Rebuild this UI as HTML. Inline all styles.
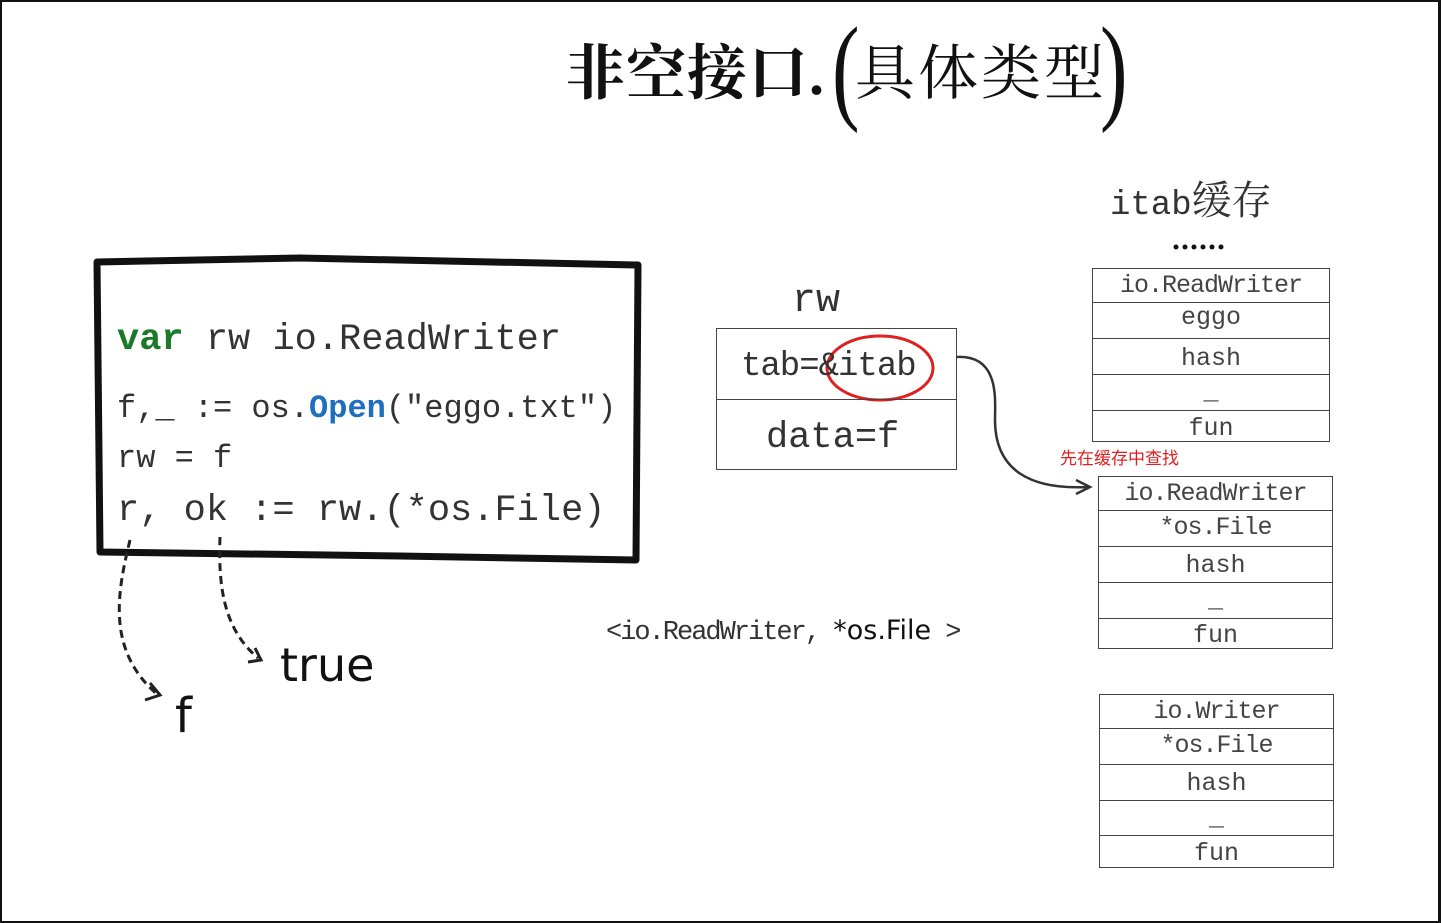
<!DOCTYPE html>
<html><head><meta charset="utf-8"><style>
body{margin:0;background:#fff;}
#c{position:relative;width:1441px;height:923px;overflow:hidden;background:#fff;}
#b{position:absolute;left:0;top:0;width:1441px;height:923px;box-sizing:border-box;border:2px solid #111;border-right:3px solid #111;pointer-events:none;}
.a{position:absolute;white-space:nowrap;line-height:1;}
.m{font-family:"Liberation Mono",monospace;color:#333;}
.t{position:absolute;border:1.5px solid #444;box-sizing:border-box;}
.r{border-bottom:1.5px solid #444;box-sizing:border-box;text-align:center;font-family:"Liberation Mono",monospace;color:#444;font-size:25px;overflow:hidden;}
.r:last-child{border-bottom:none;}
</style></head><body><div id="c">
<div class="a" style="left:565px;top:44px;font-family:'Liberation Serif','Noto Serif CJK SC',serif;font-size:60px;font-weight:bold;color:#111;letter-spacing:1px;">非空接口.</div>
<div class="a" style="left:832px;top:10px;font-family:'Liberation Serif',serif;font-size:118px;color:#111;transform:scaleX(0.7);transform-origin:left;">(</div>
<div class="a" style="left:855px;top:44px;font-family:'Liberation Serif','Noto Serif CJK SC',serif;font-size:60px;color:#111;letter-spacing:3px;">具体类型</div>
<div class="a" style="left:1100px;top:10px;font-family:'Liberation Serif',serif;font-size:118px;color:#111;transform:scaleX(0.7);transform-origin:left;">)</div>

<svg class="a" style="left:0;top:0" width="1441" height="923">
<path d="M97 262 L300 258 L638 265 L636 560 L400 556 L100 552 Z" fill="none" stroke="#111" stroke-width="7" stroke-linejoin="round"/>
<path d="M130 540 C118 590 105 650 158 695" fill="none" stroke="#222" stroke-width="3" stroke-dasharray="8,5"/>
<path d="M150 683 L160 695 L145 700" fill="none" stroke="#222" stroke-width="3"/>
<path d="M220 537 C218 590 225 630 258 658" fill="none" stroke="#222" stroke-width="3" stroke-dasharray="8,5"/>
<path d="M255 648 L261 660 L248 662" fill="none" stroke="#222" stroke-width="3"/>
<ellipse cx="880" cy="368" rx="53" ry="32" fill="none" stroke="#e02020" stroke-width="3"/>
<path d="M957 357 C1000 355 995 400 995 420 C995 470 1030 490 1088 487" fill="none" stroke="#333" stroke-width="2.5"/>
<path d="M1076 480 L1090 487 L1076 494" fill="none" stroke="#333" stroke-width="2.5"/>
<g fill="#111"><circle cx="1176" cy="247" r="2.5"/><circle cx="1185" cy="247" r="2.5"/><circle cx="1194" cy="247" r="2.5"/><circle cx="1203" cy="247" r="2.5"/><circle cx="1212" cy="247" r="2.5"/><circle cx="1221" cy="247" r="2.5"/></g>
</svg>

<div class="a m" style="left:117px;top:322px;font-size:37px;"><b style="color:#1a7a2a">var</b> rw io.ReadWriter</div>
<div class="a m" style="left:117px;top:393px;font-size:32px;">f,_ := os.<b style="color:#1f6fc0">Open</b>("eggo.txt")</div>
<div class="a m" style="left:117px;top:443px;font-size:32px;">rw = f</div>
<div class="a m" style="left:117px;top:493px;font-size:37px;">r, ok := rw.(*os.File)</div>
<div class="a" style="left:280px;top:642px;font-family:'DejaVu Sans',sans-serif;font-size:46px;color:#111;">true</div>
<div class="a" style="left:175px;top:692px;font-family:'DejaVu Sans',sans-serif;font-size:48px;color:#111;">f</div>

<div class="a m" style="left:792px;top:282px;font-size:40px;">rw</div>
<div class="t" style="left:716px;top:328px;width:241px;height:142px;">
<div style="height:71px;border-bottom:1.5px solid #444;box-sizing:border-box;"></div></div>
<div class="a m" style="left:741px;top:350px;font-size:34px;letter-spacing:-1px;">tab=&amp;itab</div>
<div class="a m" style="left:766px;top:420px;font-size:37px;">data=f</div>

<div class="a" style="left:1110px;top:185px;font-family:'Liberation Mono','Noto Serif CJK SC',monospace;font-size:34px;color:#333;">itab<span style="font-size:40px">缓存</span></div>

<div class="t" style="left:1092px;top:268px;width:238px;height:174px;">
<div class="r" style="height:34px;line-height:34px;letter-spacing:-1px">io.ReadWriter</div>
<div class="r" style="height:36px;line-height:30px">eggo</div>
<div class="r" style="height:36px;line-height:40px">hash</div>
<div class="r" style="height:36px;line-height:36px">_</div>
<div class="r" style="height:30px;line-height:36px">fun</div></div>
<div class="a" style="left:1060px;top:450px;font-family:'Liberation Sans','Noto Sans CJK SC',sans-serif;font-size:17px;color:#e02020;">先在缓存中查找</div>
<div class="t" style="left:1098px;top:476px;width:235px;height:173px;">
<div class="r" style="height:34px;line-height:34px;letter-spacing:-1px">io.ReadWriter</div>
<div class="r" style="height:36px;line-height:34px;letter-spacing:-1px">*os.File</div>
<div class="r" style="height:36px;line-height:38px">hash</div>
<div class="r" style="height:36px;line-height:36px">_</div>
<div class="r" style="height:30px;line-height:34px">fun</div></div>
<div class="t" style="left:1099px;top:694px;width:235px;height:174px;">
<div class="r" style="height:34px;line-height:34px;letter-spacing:-1px">io.Writer</div>
<div class="r" style="height:36px;line-height:34px;letter-spacing:-1px">*os.File</div>
<div class="r" style="height:36px;line-height:38px">hash</div>
<div class="r" style="height:35px;line-height:36px">_</div>
<div class="r" style="height:31px;line-height:36px">fun</div></div>

<div class="a" style="left:606px;top:617px;font-family:'Liberation Mono',monospace;font-size:27px;color:#333;letter-spacing:-2px;">&lt;io.ReadWriter, <span style="font-family:'DejaVu Sans',sans-serif;color:#111;letter-spacing:0">*os.File</span> &gt;</div>
<div id="b"></div>
</div></body></html>
